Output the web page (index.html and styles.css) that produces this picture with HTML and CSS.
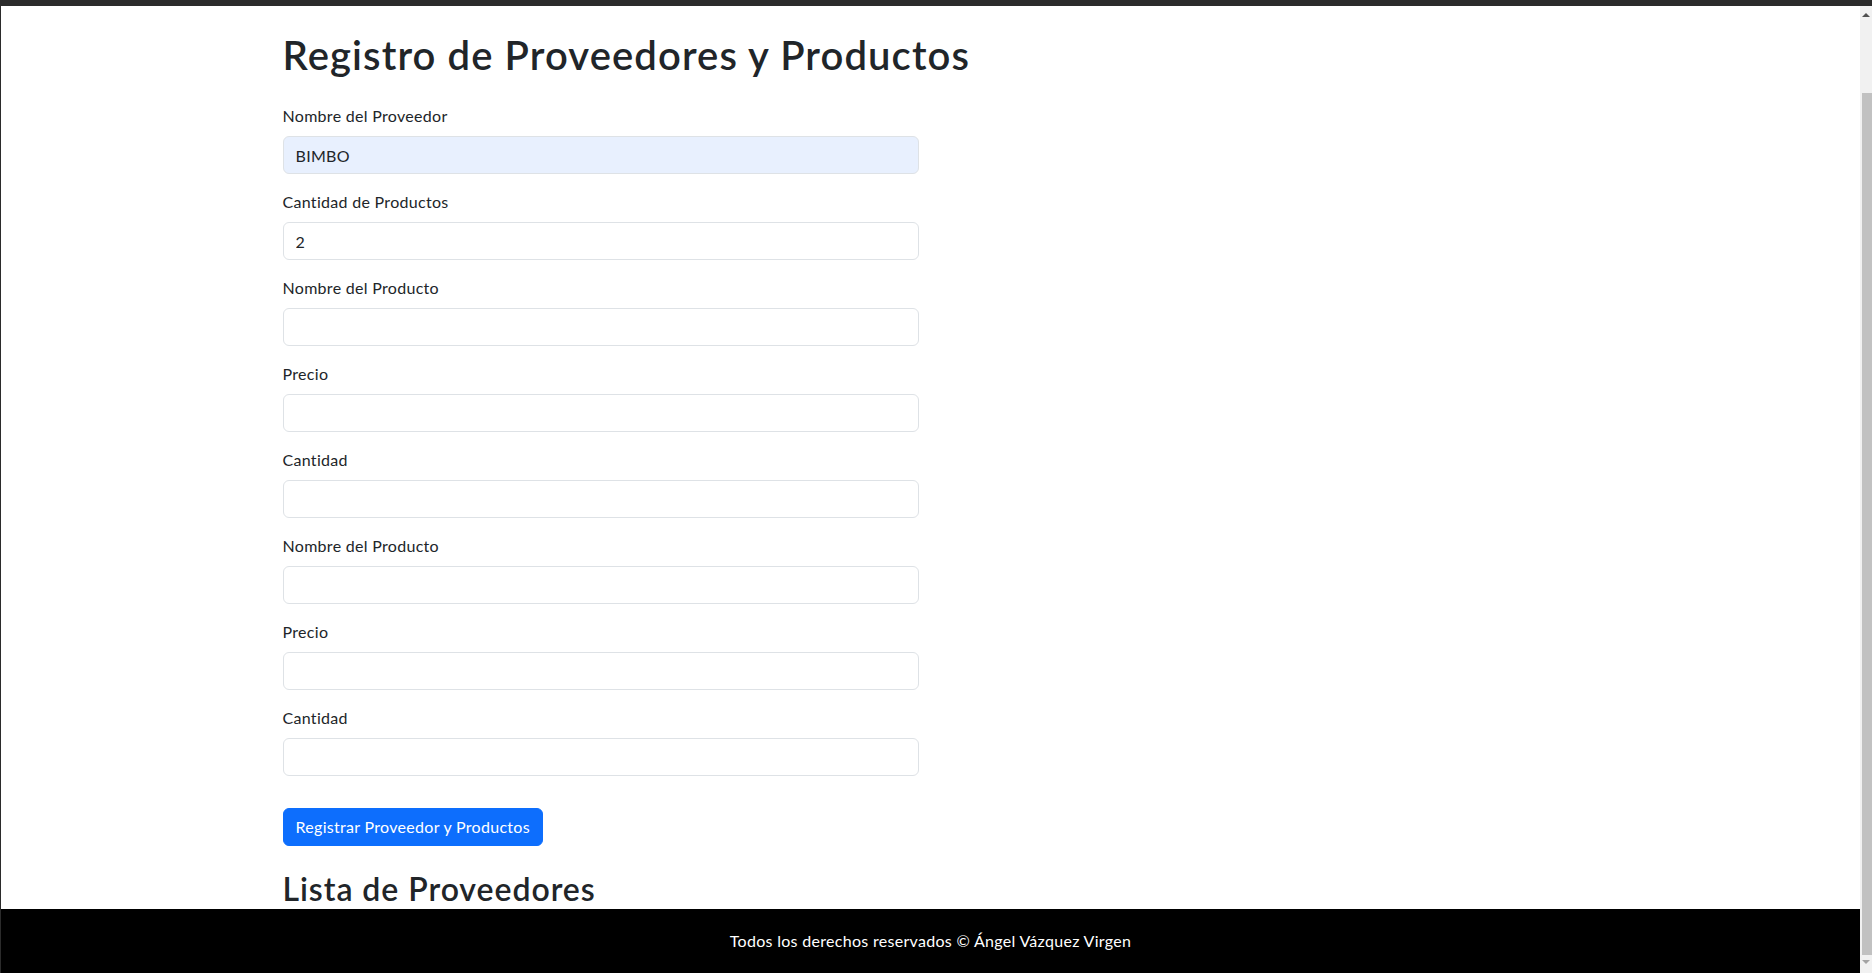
FILE: index.html
```html
<!DOCTYPE html>
<html lang="es">
<head>
<meta charset="utf-8">
<title>Registro de Proveedores y Productos</title>
<link rel="stylesheet" href="styles.css">
</head>
<body>
<div class="topbar"></div>
<div class="window">
  <div class="viewport">
    <main class="content">
      <div class="container">
        <h1 class="title">Registro de Proveedores y Productos</h1>
        <form class="row">
          <div class="col-half">
            <div class="group">
              <label class="form-label" for="prov">Nombre del Proveedor</label>
              <input class="form-control autofill" id="prov" type="text" value="BIMBO">
            </div>
            <div class="group">
              <label class="form-label" for="cant">Cantidad de Productos</label>
              <input class="form-control" id="cant" type="number" value="2">
            </div>
            <div class="group">
              <label class="form-label" for="p1n">Nombre del Producto</label>
              <input class="form-control" id="p1n" type="text">
            </div>
            <div class="group">
              <label class="form-label" for="p1p">Precio</label>
              <input class="form-control" id="p1p" type="text">
            </div>
            <div class="group">
              <label class="form-label" for="p1c">Cantidad</label>
              <input class="form-control" id="p1c" type="text">
            </div>
            <div class="group">
              <label class="form-label" for="p2n">Nombre del Producto</label>
              <input class="form-control" id="p2n" type="text">
            </div>
            <div class="group">
              <label class="form-label" for="p2p">Precio</label>
              <input class="form-control" id="p2p" type="text">
            </div>
            <div class="group">
              <label class="form-label" for="p2c">Cantidad</label>
              <input class="form-control" id="p2c" type="text">
            </div>
            <button type="button" class="btn-primary">Registrar Proveedor y Productos</button>
          </div>
        </form>
        <h2 class="subtitle">Lista de Proveedores</h2>
      </div>
    </main>
    <footer class="footer">Todos los derechos reservados © Ángel Vázquez Virgen</footer>
  </div>
  <div class="scrollbar">
    <div class="arrow-up"></div>
    <div class="track-top"></div>
    <div class="thumb"></div>
    <div class="arrow-down"></div>
  </div>
</div>
</body>
</html>
```

FILE: styles.css
```css
* { box-sizing: border-box; }
html, body { height: 100%; }
body {
  margin: 0;
  display: flex;
  flex-direction: column;
  overflow: hidden;
  font-family: Lato, "Open Sans", "Liberation Sans", sans-serif;
  font-size: 16px;
  line-height: 1.5;
  letter-spacing: 0.3px;
  color: #212529;
  background: #fff;
}
.topbar { height: 6px; background: #2b2b2b; flex: none; }
.window { flex: 1; display: flex; min-height: 0; }
.viewport {
  flex: 1;
  min-width: 0;
  display: flex;
  flex-direction: column;
  border-left: 1px solid #2b2b2b;
}
.content { flex: 1; min-height: 0; overflow: hidden; }
.container {
  max-width: 1320px;
  margin: 0 auto;
  padding: 25px 12px 0;
}
.title {
  margin: 0 0 25px;
  font-size: 40px;
  font-weight: 600;
  line-height: 1.2;
  letter-spacing: 1.1px;
}
.row { display: flex; margin: 0 -12px; }
.col-half { width: 50%; padding: 0 12px; }
.group { margin-bottom: 16px; }
.form-label { display: inline-block; margin-bottom: 8px; }
.form-control {
  display: block;
  width: 100%;
  height: 38px;
  padding: 6px 12px;
  font: inherit;
  letter-spacing: inherit;
  color: #212529;
  background: #fff;
  border: 1px solid #dee2e6;
  border-radius: 6px;
  outline: none;
  appearance: none;
  -moz-appearance: textfield;
}
.form-control::-webkit-outer-spin-button,
.form-control::-webkit-inner-spin-button { -webkit-appearance: none; margin: 0; }
.autofill { background: #e8f0fe; }
.btn-primary {
  margin-top: 16px;
  height: 38px;
  padding: 6px 12px;
  font: inherit;
  letter-spacing: inherit;
  color: #fff;
  background: #0d6efd;
  border: 1px solid #0d6efd;
  border-radius: 6px;
}
.subtitle {
  margin: 24px 0 0;
  font-size: 32px;
  font-weight: 600;
  line-height: 1.2;
  letter-spacing: 0.95px;
}
.footer {
  flex: none;
  height: 64px;
  background: #000;
  color: #fff;
  display: flex;
  align-items: center;
  justify-content: center;
}
.scrollbar {
  flex: none;
  width: 12px;
  background: #f1f1f1;
  display: flex;
  flex-direction: column;
  align-items: flex-end;
}
.arrow-up {
  margin: 7px 2px 0 0;
  width: 0; height: 0;
  border-left: 4px solid transparent;
  border-right: 4px solid transparent;
  border-bottom: 4px solid #505050;
}
.track-top { height: 76px; }
.thumb { width: 10px; flex: 1; background: #c1c1c1; }
.arrow-down {
  margin: 5px 2px 9px 0;
  width: 0; height: 0;
  border-left: 4px solid transparent;
  border-right: 4px solid transparent;
  border-top: 4px solid #a3a3a3;
}
```
